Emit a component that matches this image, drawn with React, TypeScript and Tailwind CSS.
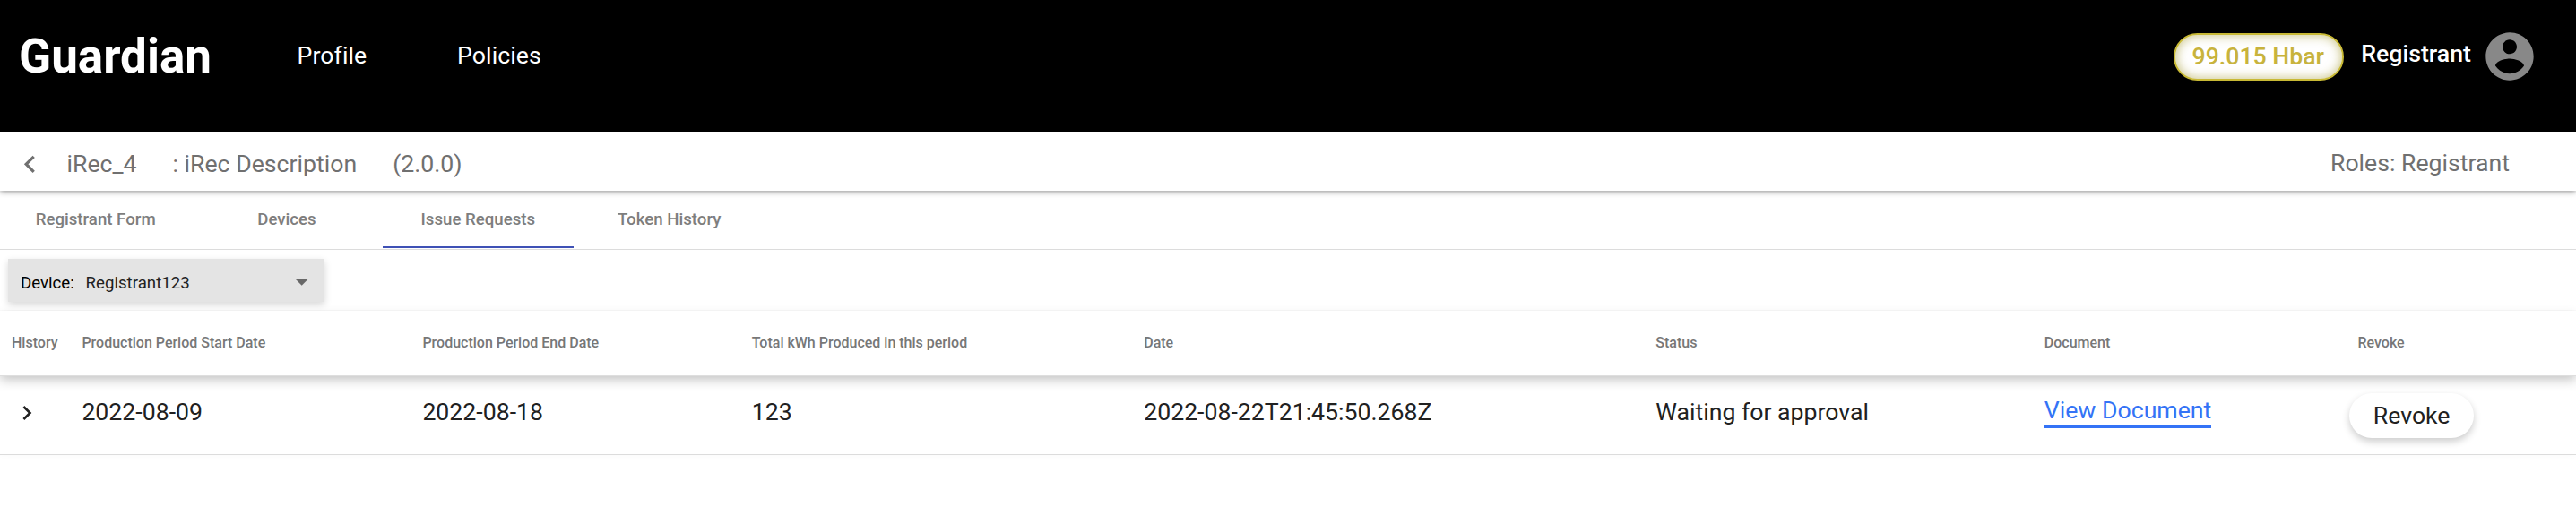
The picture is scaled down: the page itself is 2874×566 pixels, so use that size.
import React from "react";

const TABS = ["Registrant Form", "Devices", "Issue Requests", "Token History"];
const ACTIVE_TAB = "Issue Requests";

const HEADERS = [
  "Production Period Start Date",
  "Production Period End Date",
  "Total kWh Produced in this period",
  "Date",
  "Status",
  "Document",
  "Revoke",
];

const ROW = ["2022-08-09", "2022-08-18", "123", "2022-08-22T21:45:50.268Z", "Waiting for approval"];

const GRID =
  "grid grid-cols-[91.4px_380px_367.3px_437.5px_571.1px_433.5px_349.7px_1fr]";

function TopBar() {
  return (
    <header className="flex h-[147px] items-start bg-black pl-[21px] pr-[47px] text-[26.667px] text-white">
      <div className="w-[310.5px] text-[53px] font-bold leading-[126px]">Guardian</div>
      <nav className="flex leading-[125px]">
        <a className="w-[178.5px] tracking-[0.1px]">Profile</a>
        <a className="tracking-[0.1px]">Policies</a>
      </nav>
      <div className="ml-auto flex">
        <div className="mt-[37px] flex h-[53px] w-[190px] items-center justify-center rounded-full border-2 border-[#c8b935] bg-white pr-[2px] font-medium text-[#c8b33c] shadow-[inset_0_0_12px_1px_rgba(160,150,40,0.55)]">
          <span className="-mt-[1px] leading-[49px]">99.015 Hbar</span>
        </div>
        <span className="ml-[19px] w-[139.3px] font-medium leading-[121px]">Registrant</span>
        <svg className="-ml-[5.3px] -mr-[5.3px] mt-[31px] h-16 w-16" viewBox="0 0 24 24" fill="#888888">
          <path d="M12 2C6.48 2 2 6.48 2 12s4.48 10 10 10 10-4.48 10-10S17.52 2 12 2zm0 3c1.66 0 3 1.34 3 3s-1.34 3-3 3-3-1.34-3-3 1.34-3 3-3zm0 14.2c-2.5 0-4.71-1.28-6-3.22.03-1.99 4-3.08 6-3.08 1.99 0 5.97 1.09 6 3.08-1.29 1.94-3.5 3.22-6 3.22z" />
        </svg>
      </div>
    </header>
  );
}

function PolicyBar() {
  return (
    <div className="relative z-10 flex h-[66px] items-center bg-white pl-[14px] pr-[74px] pt-[6px] text-[26.667px] text-[#707070] shadow-[0_1px_6px_rgba(0,0,0,0.45)] [clip-path:inset(0_0_-20px_0)]">
      <svg className="mr-[21.8px] h-[38.7px] w-[38.7px]" viewBox="0 0 24 24" fill="currentColor">
        <path d="M15.41 7.41L14 6l-6 6 6 6 1.41-1.41L10.83 12z" />
      </svg>
      <span className="mr-10">iRec_4</span>
      <span className="mr-10">: iRec Description</span>
      <span>(2.0.0)</span>
      <span className="-mt-[2px] ml-auto">Roles: Registrant</span>
    </div>
  );
}

function Tabs() {
  return (
    <nav className="flex h-[65.5px] border-b border-[#dcdcdc] text-[18.667px] font-medium text-[#7e7e7e]">
      {TABS.map((tab) => (
        <a
          key={tab}
          className={
            tab === ACTIVE_TAB
              ? "h-[64px] w-[213.33px] border-b-2 border-[#3f51b5] text-center leading-[65px]"
              : "h-[64px] w-[213.33px] text-center leading-[65px]"
          }
        >
          {tab}
        </a>
      ))}
    </nav>
  );
}

function DeviceFilter() {
  return (
    <div className="h-[68px] pl-[9px] pt-[10.5px] text-[18.667px]">
      <div className="flex h-12 w-[353px] items-center bg-[#e4e4e4] pb-px pl-[14px] pr-[18.3px] pt-[7px] leading-[40px] shadow-[0_3px_8px_rgba(0,0,0,0.16)]">
        <span className="-mt-[1px] w-[72.6px] text-black">Device:</span>
        <span className="-mt-[1px] text-[#212121]">Registrant123</span>
        <svg className="-mt-[1px] ml-auto h-[6.67px] w-[13.33px]" viewBox="0 0 10 5" fill="#686868">
          <path d="M0 0h10L5 5z" />
        </svg>
      </div>
    </div>
  );
}

function DocumentsTable() {
  return (
    <section className="relative bg-white shadow-[0_-1px_8px_rgba(0,0,0,0.04)]">
      <div
        className={
          GRID +
          " relative z-10 h-[73.5px] border-b border-[#dedede] bg-white text-[16px] font-medium leading-[71px] text-[#777777] shadow-[0_4px_12px_rgba(0,0,0,0.24)] [clip-path:inset(0_0_-30px_0)]"
        }
      >
        <div className="pl-[13px]">History</div>
        {HEADERS.map((h) => (
          <div key={h}>{h}</div>
        ))}
      </div>
      <div className={GRID + " h-[87.5px] border-b border-[#dcdcdc] text-[26.667px] leading-[80px] text-[#212121]"}>
        <svg className="ml-[13.8px] mt-[25px] h-8 w-8" viewBox="0 0 24 24" fill="currentColor">
          <path d="M10 6L8.59 7.41 13.17 12l-4.58 4.59L10 18l6-6z" />
        </svg>
        {ROW.map((v) => (
          <div key={v}>{v}</div>
        ))}
        <div>
          <a className="mt-[20px] inline-block h-[38px] border-b-4 border-[#3473f6] align-top leading-[37px] text-[#3473f6]">
            View Document
          </a>
        </div>
        <button className="-ml-[9.3px] mt-[19px] h-[50px] w-[139px] rounded-full bg-white leading-[50px] shadow-[0_4px_8px_rgba(0,0,0,0.2)]">
          Revoke
        </button>
      </div>
    </section>
  );
}

export default function App() {
  return (
    <div className="h-[566px] w-full overflow-hidden bg-white font-['Roboto',sans-serif]">
      <TopBar />
      <PolicyBar />
      <Tabs />
      <DeviceFilter />
      <DocumentsTable />
    </div>
  );
}
